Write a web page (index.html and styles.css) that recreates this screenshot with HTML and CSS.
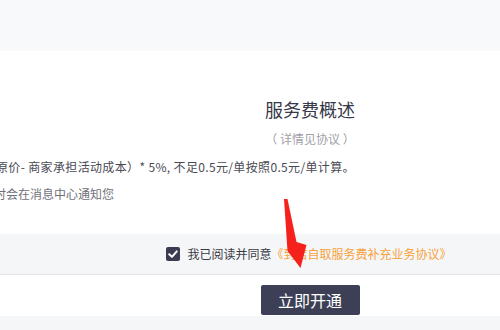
FILE: index.html
```html
<!DOCTYPE html>
<html lang="zh-CN">
<head>
<meta charset="utf-8">
<link rel="stylesheet" href="styles.css">
</head>
<body>
<div class="page">
  <div class="top-band"></div>
  <div class="content">
    <h2 class="title">服务费概述</h2>
    <p class="subtitle">（ 详情见协议 ）</p>
    <p class="desc desc-main">原价- 商家承担活动成本）* 5%, 不足0.5元/单按照0.5元/单计算。</p>
    <p class="desc desc-note">时会在消息中心通知您</p>
  </div>
  <div class="agree-band">
    <span class="checkbox">
      <svg width="14" height="14" viewBox="0 0 14 14"><rect width="14" height="14" rx="2" fill="#3b3c52"/><path d="M3.2 7.2 L6 9.8 L10.8 4.4" fill="none" stroke="#fff" stroke-width="2" stroke-linecap="round" stroke-linejoin="round"/></svg>
    </span>
    <span class="agree-text">我已阅读并同意</span><span class="agree-link">《到店自取服务费补充业务协议》</span>
  </div>
  <div class="action-band">
    <button class="open-btn">立即开通</button>
  </div>
  <div class="bottom-band"></div>
  <svg class="arrow" width="500" height="330" viewBox="0 0 500 330">
    <polygon points="284,199 287.5,199 296.5,242 306.5,245 300.5,268 287.5,251" fill="#f5211c"/>
  </svg>
</div>
</body>
</html>
```

FILE: styles.css
```css
html, body {
  margin: 0;
  padding: 0;
  background: #ffffff;
  overflow: hidden;
}
body {
  font-family: "Noto Sans CJK SC", "Noto Sans", sans-serif;
  width: 500px;
  height: 330px;
}
.page {
  position: relative;
  width: 500px;
  height: 330px;
  display: flex;
  flex-direction: column;
}
.top-band {
  height: 51px;
  background: #f8f9fb;
}
.content {
  height: 183px;
  background: #fff;
  padding-top: 46px;
  box-sizing: border-box;
}
.title {
  margin: 0;
  padding-left: 120px;
  text-align: center;
  font-size: 18px;
  font-weight: normal;
  line-height: 24px;
  color: #363748;
}
.subtitle {
  margin: 10px 0 0;
  padding-left: 120px;
  text-align: center;
  font-size: 12px;
  line-height: 16px;
  color: #a0a0a8;
  white-space: pre;
}
.desc {
  margin: 0;
  font-size: 12px;
  line-height: 16px;
  white-space: nowrap;
}
.desc-main {
  margin-top: 12px;
  margin-left: -4px;
  color: #4a4a55;
  letter-spacing: 0.35px;
}
.desc-note {
  margin-top: 11px;
  margin-left: -6px;
  color: #70707a;
}
.agree-band {
  height: 40px;
  background: #f5f6f8;
  border-bottom: 1px solid #e2e3e6;
  display: flex;
  align-items: center;
  justify-content: center;
  padding-left: 118px;
  font-size: 12px;
  line-height: 16px;
}
.checkbox {
  display: flex;
  width: 14px;
  height: 14px;
  margin-right: 7px;
}
.agree-text {
  color: #3a3a45;
}
.agree-link {
  color: #f7a23a;
}
.action-band {
  height: 41px;
  display: flex;
  justify-content: center;
  align-items: flex-start;
  padding-top: 10px;
  padding-left: 120px;
  box-sizing: border-box;
}
.open-btn {
  width: 99px;
  height: 30px;
  border: none;
  border-radius: 2px;
  background: #3d3f56;
  color: #fff;
  font-family: "Noto Sans CJK SC", sans-serif;
  font-size: 16px;
  line-height: 30px;
  padding: 0;
}
.bottom-band {
  flex: 1;
  background: #f5f6f8;
}
.arrow {
  position: absolute;
  left: 0;
  top: 0;
  pointer-events: none;
}
```
